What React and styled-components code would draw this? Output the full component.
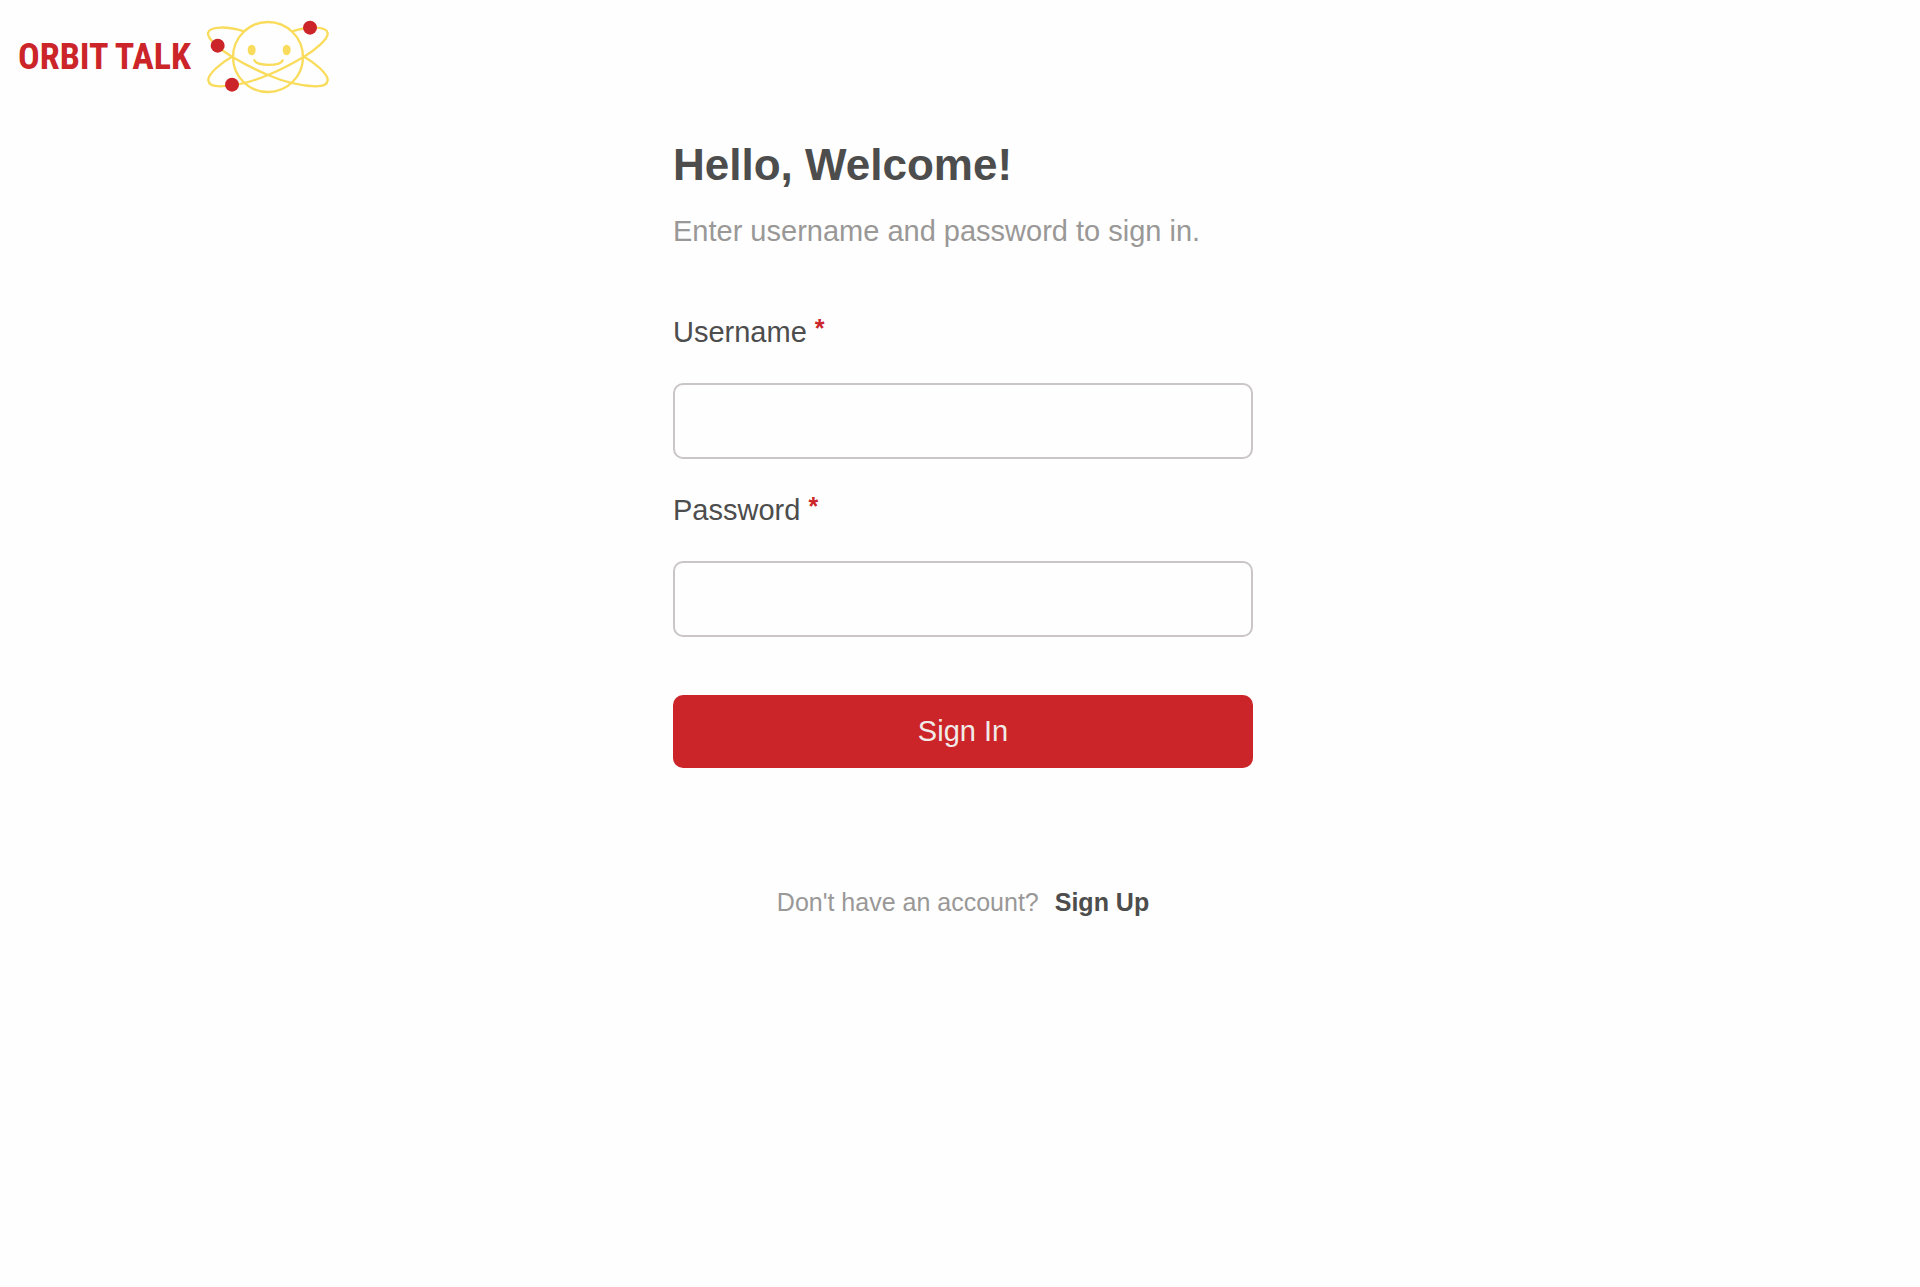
import React from 'react';
import styled, { createGlobalStyle } from 'styled-components';

const colors = {
  red: '#cc2529',
  yellow: '#f9dc5c',
  darkGray: '#4c4d4c',
  gray: '#999897',
  lightGray: '#cac6c6',
  offWhite: '#f0ebe8',
  white: '#fefefe',
};

const GlobalStyle = createGlobalStyle`
  * {
    box-sizing: border-box;
  }

  body {
    margin: 0;
    background-color: ${colors.white};
    color: ${colors.darkGray};
    font-family: 'Liberation Sans', Arial, sans-serif;
  }
`;

const Page = styled.div`
  padding: 20px 12px 48px 18px;
`;

const Header = styled.header`
  display: flex;
`;

const LogoLink = styled.a`
  display: flex;
  align-items: center;
  gap: 15px;
  color: ${colors.red};
  text-decoration: none;
`;

const LogoText = styled.span`
  font-family: 'Liberation Sans Narrow', 'Roboto Condensed', 'Liberation Sans',
    sans-serif;
  font-size: 36px;
  font-weight: 700;
  line-height: 48px;
  white-space: nowrap;
`;

const LogoMark = styled.svg`
  width: 124px;
  height: 74px;
`;

const Main = styled.main`
  width: 100%;
  max-width: 580px;
  margin: 45px auto 0;
`;

const Title = styled.h1`
  margin: 0;
  font-size: 44px;
  font-weight: 700;
  line-height: 52px;
`;

const Subtitle = styled.p`
  margin: 22px 0 0;
  color: ${colors.gray};
  font-size: 29px;
  line-height: 36px;
`;

const Form = styled.form`
  display: flex;
  flex-direction: column;
  margin-top: 65px;
`;

const Field = styled.div`
  display: flex;
  flex-direction: column;
  gap: 33px;
  margin-bottom: 33px;
`;

const Label = styled.label`
  font-size: 29px;
  line-height: 36px;
`;

const Required = styled.span`
  color: ${colors.red};
  font-size: 25px;
  font-weight: 700;
  line-height: 1;
  vertical-align: text-top;
`;

const Input = styled.input`
  width: 100%;
  height: 76px;
  padding: 0 20px;
  border: 2px solid ${colors.lightGray};
  border-radius: 10px;
  background-color: ${colors.white};
  color: inherit;
  font: inherit;
  font-size: 29px;
`;

const SubmitButton = styled.button`
  height: 73px;
  margin-top: 25px;
  border: none;
  border-radius: 10px;
  background-color: ${colors.red};
  color: ${colors.offWhite};
  font: inherit;
  font-size: 29px;
  cursor: pointer;
`;

const Footer = styled.p`
  display: flex;
  justify-content: center;
  gap: 16px;
  margin: 118px 0 0;
  color: ${colors.gray};
  font-size: 25px;
  line-height: 32px;
`;

const FooterLink = styled.a`
  color: ${colors.darkGray};
  font-weight: 700;
  text-decoration: none;
`;

const Logo = () => (
  <LogoLink href="/">
    <LogoText>ORBIT TALK</LogoText>
    <LogoMark viewBox="50 60 372 222" aria-hidden="true">
      <g
        fill="none"
        stroke={colors.yellow}
        strokeWidth="7"
        strokeLinecap="round"
      >
        <circle cx="236" cy="171" r="105" />
        <path d="M164 94C120 80 60 76 56 99C54 117 95 151 128 170C165 192 200 210 236 225C285 246 330 258 380 259C402 259 414 253 415 241C416 222 378 189 344 170" />
        <path d="M309 94C352 80 412 76 415 99C417 117 377 151 344 170C307 192 272 210 236 225C187 246 142 258 92 259C70 259 58 253 57 241C56 222 94 189 128 170" />
        <path d="M195 181C203 199 274 199 280 181" />
      </g>
      <g fill={colors.yellow}>
        <ellipse cx="187" cy="150" rx="12" ry="16" />
        <ellipse cx="292" cy="150" rx="12" ry="16" />
      </g>
      <g fill={colors.red}>
        <circle cx="362" cy="83" r="21" />
        <circle cx="85" cy="137" r="21" />
        <circle cx="128" cy="254" r="21" />
      </g>
    </LogoMark>
  </LogoLink>
);

const FormField = ({ id, label, type }) => (
  <Field>
    <Label htmlFor={id}>
      {label} <Required>*</Required>
    </Label>
    <Input id={id} name={id} type={type} required />
  </Field>
);

const App = () => (
  <>
    <GlobalStyle />
    <Page>
      <Header>
        <Logo />
      </Header>
      <Main>
        <Title>Hello, Welcome!</Title>
        <Subtitle>Enter username and password to sign in.</Subtitle>
        <Form onSubmit={(e) => e.preventDefault()}>
          <FormField id="username" label="Username" type="text" />
          <FormField id="password" label="Password" type="password" />
          <SubmitButton type="submit">Sign In</SubmitButton>
        </Form>
        <Footer>
          Don&apos;t have an account?
          <FooterLink href="/signup">Sign Up</FooterLink>
        </Footer>
      </Main>
    </Page>
  </>
);

export default App;
